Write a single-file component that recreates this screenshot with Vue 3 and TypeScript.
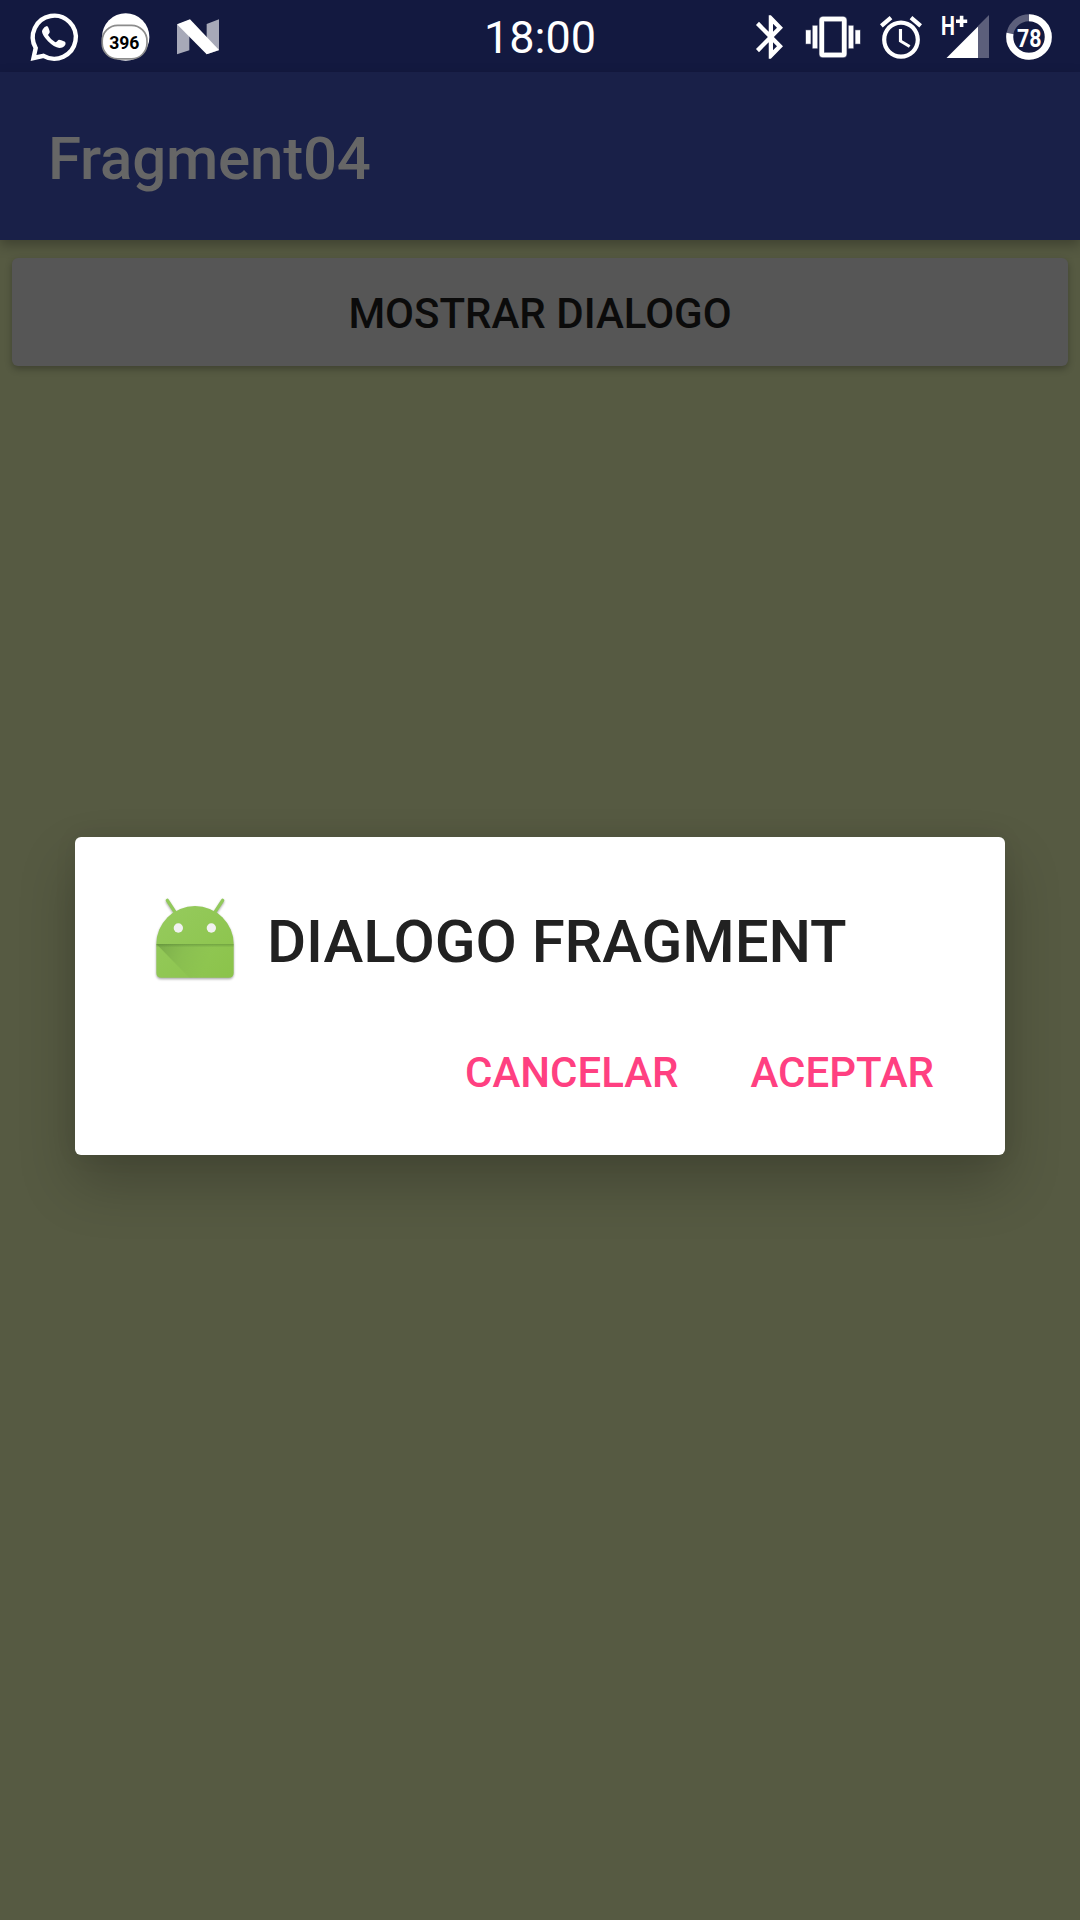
<script setup lang="ts">
const clock: string = '18:00'
const notificationCount: number = 396
const batteryLevel: number = 78
const appTitle: string = 'Fragment04'
const dialogTitle: string = 'DIALOGO FRAGMENT'
const dialogActions: string[] = ['CANCELAR', 'ACEPTAR']
</script>

<template>
  <div class="screen">
    <header class="status-bar">
      <div class="notifications">
        <svg class="icon" width="52" height="52" viewBox="28 10 52 52">
          <path d="M43.5 54.8A21.5 21.5 0 1 0 35.7 47L33.5 57Z" fill="none" stroke="#fff" stroke-width="4.4" />
          <path
            transform="scale(.33333)"
            fill="#fff"
            d="M129 84Q133 76 141 75Q145 76 149 91Q151 95 144 102Q152 116 166 124Q169 124 175 117Q178 115 195 122Q198 125 196 131Q190 141 178 141Q162 139 144 121Q127 102 126 92Q126 88 129 84Z"
          />
        </svg>
        <svg class="icon counter" width="52" height="52" viewBox="100 10 52 52">
          <circle cx="125.7" cy="36" r="23.7" fill="#fff" />
          <rect x="102.200" y="24.3" width="44.8" height="33.5" rx="15.5" fill="#fff" stroke="#8c8c8c" stroke-width="1.7" />
          <text x="124.3" y="47.900" text-anchor="middle" font-size="17.6" font-weight="700" fill="#000">{{ notificationCount }}</text>
        </svg>
        <svg class="icon nougat" width="46" height="52" viewBox="175 10 46 52">
          <g transform="scale(.33333)">
            <path d="M531 71L568 57V148L531 160ZM620 69L657 55V148L620 160Z" fill="#a7a9b8" />
            <path d="M531 70L570 55L657 147L620 160Z" fill="#fff" />
          </g>
        </svg>
      </div>

      <time class="clock">{{ clock }}</time>

      <div class="system">
        <svg class="icon bluetooth" width="27" height="52" viewBox="5 0 12.71 24" preserveAspectRatio="none">
          <path
            fill="#fff"
            d="M17.71 7.71L12 2h-1v7.59L6.41 5 5 6.41 10.59 12 5 17.59 6.41 19 11 14.41V22h1l5.71-5.71-4.3-4.29 4.3-4.29zM13 5.83l1.88 1.88L13 9.59V5.83zm1.88 10.46L13 18.17v-3.76l1.88 1.88z"
          />
        </svg>
        <svg class="icon vibrate" width="54" height="54" viewBox="0 0 24 24">
          <path
            fill="#fff"
            stroke="#fff"
            stroke-opacity=".35"
            stroke-width=".5"
            d="M0 15h2V9H0v6zm3 2h2V7H3v10zm19-8v6h2V9h-2zm-3 8h2V7h-2v10zM16.5 3h-9C6.67 3 6 3.67 6 4.5v15c0 .83.67 1.5 1.5 1.5h9c.83 0 1.5-.67 1.5-1.5v-15c0-.83-.67-1.5-1.5-1.5zM16 19H8V5h8v14z"
          />
        </svg>
        <svg class="icon alarm" width="42" height="51" viewBox="2 0 20 24" preserveAspectRatio="none">
          <path
            fill="#fff"
            d="M22 5.72l-4.6-3.86-1.29 1.53 4.6 3.86L22 5.72zM7.88 3.39L6.6 1.86 2 5.71l1.29 1.53 4.59-3.85zM12.5 8H11v6l4.75 2.85.75-1.23-4-2.37V8zM12 4c-4.97 0-9 4.03-9 9s4.02 9 9 9c4.97 0 9-4.03 9-9s-4.03-9-9-9zm0 16c-3.87 0-7-3.13-7-7s3.13-7 7-7 7 3.13 7 7-3.13 7-7 7z"
          />
        </svg>
        <svg class="icon signal" width="50" height="52" viewBox="940 10 50 52">
          <path d="M978 57V25L989 14V57Z" fill="#5c5f7b" />
          <path d="M946.5 57L978 25.500V57Z" fill="#fff" />
          <text transform="translate(940.9 33.7) scale(.76 1)" font-size="26" font-weight="700" fill="#fff">H</text>
          <path d="M959.800 14.700h3.600v3.800h3.800v3.600h-3.800v4h-3.600v-4h-3.800v-3.600h3.800z" fill="#fff" />
        </svg>
        <svg class="icon battery" width="48" height="52" viewBox="1005 10 48 52">
          <circle cx="1029" cy="36" r="19.3" fill="none" stroke="#5c5f7b" stroke-width="7" />
          <circle
            cx="1029" cy="36" r="19.3" fill="none" stroke="#fff" stroke-width="7"
            pathLength="100" :stroke-dasharray="`${batteryLevel} 100`" transform="rotate(-90 1029 36)"
          />
          <text transform="translate(1029.2 45.800) scale(.84 1)" text-anchor="middle" font-size="25.5" font-weight="700" fill="#fff">{{ batteryLevel }}</text>
        </svg>
      </div>
    </header>

    <div class="toolbar">
      <h1 class="app-title">{{ appTitle }}</h1>
    </div>

    <main class="content">
      <button class="raised-button" type="button">MOSTRAR DIALOGO</button>
    </main>

    <div class="overlay">
      <section class="dialog" role="dialog">
        <div class="dialog-header">
          <svg class="robot" width="96" height="96" viewBox="51 33 288 288">
            <defs>
              <linearGradient id="robot-shade" gradientUnits="userSpaceOnUse" x1="79" y1="192" x2="232" y2="252">
                <stop offset="0" stop-color="#4f7b30" stop-opacity=".5" />
                <stop offset=".5" stop-color="#5f8c3a" stop-opacity=".18" />
                <stop offset="1" stop-color="#6f9f45" stop-opacity="0" />
              </linearGradient>
              <linearGradient id="fold-shade" x1="0" y1="0" x2="0" y2="1">
                <stop offset="0" stop-color="#4f7b30" stop-opacity=".45" />
                <stop offset="1" stop-color="#4f7b30" stop-opacity="0" />
              </linearGradient>
              <linearGradient id="robot-green" x1="0" y1="0" x2="1" y2="1">
                <stop offset="0" stop-color="#96cb5e" />
                <stop offset="1" stop-color="#8bc34a" />
              </linearGradient>
            </defs>
            <g class="robot-body">
              <path d="M112 61L138 101M278 61L252 101" stroke="#92c95b" stroke-width="10" stroke-linecap="round" />
              <path d="M79 192A116 114 0 0 1 311 192V278Q311 293 296 293H94Q79 293 79 278Z" fill="url(#robot-green)" />
            </g>
            <path d="M79 192H311V293H178Z" fill="url(#robot-shade)" opacity=".8" />
            <path d="M79 192H311V202H79Z" fill="url(#fold-shade)" />
            <circle cx="145" cy="144" r="14" fill="#f1f1f1" />
            <circle cx="244" cy="144" r="14" fill="#f1f1f1" />
          </svg>
          <h2 class="dialog-title">{{ dialogTitle }}</h2>
        </div>
        <div class="dialog-actions">
          <button v-for="action in dialogActions" :key="action" class="flat-button" type="button">{{ action }}</button>
        </div>
      </section>
    </div>
  </div>
</template>

<style>
body {
  margin: 0;
  background: #565a42;
}
</style>

<style scoped>
.screen {
  position: relative;
  display: flex;
  flex-direction: column;
  width: 1080px;
  height: 1920px;
  overflow: hidden;
  background: #565a42;
  font-family: Roboto, "Noto Sans", sans-serif;
}

.status-bar {
  display: grid;
  grid-template-columns: 1fr auto 1fr;
  align-items: center;
  flex: none;
  height: 72px;
  background: #131940;
  color: #fff;
}

.icon {
  display: block;
  flex: none;
  overflow: visible;
}

.notifications,
.system {
  display: flex;
  align-items: center;
}

.notifications {
  padding-left: 27.5px;
}

.counter {
  margin-left: 20px;
}

.nougat {
  margin-left: 23.5px;
}

.clock {
  font-size: 45px;
  line-height: 72px;
  padding-top: 2px;
}

.system {
  justify-content: flex-end;
  padding-right: 27px;
}

.bluetooth {
  margin-right: 23px;
}

.alarm {
  margin-left: 20px;
}

.signal {
  margin-left: 18px;
}

.battery {
  margin-left: 15px;
}

.toolbar {
  display: flex;
  align-items: center;
  flex: none;
  height: 168px;
  padding: 0 48px;
  box-sizing: border-box;
  background: #192048;
  box-shadow: 0 5px 12px rgba(0, 0, 0, 0.28);
}

.app-title {
  margin: 0;
  padding-top: 5px;
  font-size: 60px;
  font-weight: 500;
  line-height: 70px;
  letter-spacing: -0.2px;
  color: #666;
}

.content {
  display: flex;
  flex-direction: column;
  padding: 18px 12px;
}

.raised-button {
  height: 108px;
  padding: 4px 0 0;
  border: 0;
  border-radius: 6px;
  background: #565656;
  box-shadow: 0 3px 7px rgba(0, 0, 0, 0.28);
  font: 500 42px/50px Roboto, sans-serif;
  color: #0b0b0b;
}

.overlay {
  position: absolute;
  inset: 72px 0 0;
  display: flex;
  align-items: center;
  justify-content: center;
}

.dialog {
  width: 930px;
  height: 318px;
  box-sizing: border-box;
  padding: 54px 71px 0 72px;
  border-radius: 6px;
  background: #fff;
  box-shadow: 0 28px 56px rgba(0, 0, 0, 0.22), 0 0 24px rgba(0, 0, 0, 0.06);
}

.dialog-header {
  display: flex;
  align-items: center;
  gap: 24px;
  height: 96px;
}

.robot {
  flex: none;
}

.robot-body {
  filter: drop-shadow(0 4px 3px rgba(0, 0, 0, 0.35));
}

.dialog-title {
  margin: 0;
  padding-top: 6px;
  font-size: 60px;
  font-weight: 500;
  line-height: 70px;
  letter-spacing: -0.1px;
  color: #212121;
  white-space: nowrap;
}

.dialog-actions {
  display: flex;
  justify-content: flex-end;
  gap: 72px;
  margin-top: 61px;
}

.flat-button {
  padding: 0;
  border: 0;
  background: none;
  font: 500 42px/50px Roboto, sans-serif;
  color: #ff4081;
}
</style>
